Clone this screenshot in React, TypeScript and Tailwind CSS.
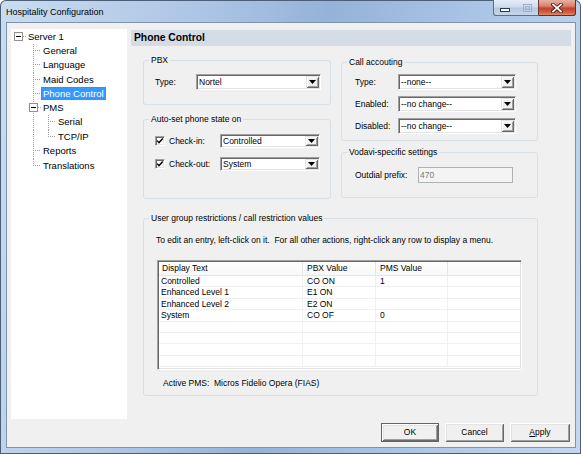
import React from "react";

type TreeItem = {
  label: string;
  kind: "root" | "l1" | "l1last" | "pms" | "l2" | "l2last";
  h: string;
  hp: number;
  selected?: boolean;
};

const tree: TreeItem[] = [
  { label: "Server 1", kind: "root", h: "h-[14px]", hp: 14 },
  { label: "General", kind: "l1", h: "h-[14px]", hp: 14 },
  { label: "Language", kind: "l1", h: "h-[15px]", hp: 15 },
  { label: "Maid Codes", kind: "l1", h: "h-[14px]", hp: 14 },
  { label: "Phone Control", kind: "l1", h: "h-[14px]", hp: 14, selected: true },
  { label: "PMS", kind: "pms", h: "h-[14px]", hp: 14 },
  { label: "Serial", kind: "l2", h: "h-[15px]", hp: 15 },
  { label: "TCP/IP", kind: "l2last", h: "h-[14px]", hp: 14 },
  { label: "Reports", kind: "l1", h: "h-[15px]", hp: 15 },
  { label: "Translations", kind: "l1last", h: "h-[14px]", hp: 14 },
];

function dotsH(x1: number, x2: number, y: number) {
  const r: React.ReactNode[] = [];
  for (let x = x1; x <= x2; x += 2) r.push(<rect key={`h${x}-${y}`} x={x} y={y} width={1} height={1} />);
  return r;
}
function dotsV(x: number, y1: number, y2: number) {
  const r: React.ReactNode[] = [];
  for (let y = y1; y <= y2; y += 2) r.push(<rect key={`v${x}-${y}`} x={x} y={y} width={1} height={1} />);
  return r;
}

function Box({ cx, cy }: { cx: number; cy: number }) {
  return (
    <g>
      <rect x={cx - 3.5} y={cy - 3.5} width={8} height={8} fill="#ffffff" stroke="#919191" strokeWidth={1} />
      <rect x={cx - 2} y={cy} width={5} height={1} fill="#000000" />
    </g>
  );
}

function TreeLines({ item }: { item: TreeItem }) {
  const h = item.hp;
  const cy = 6;
  let w = 30;
  if (item.kind === "root") w = 15;
  if (item.kind === "l2" || item.kind === "l2last") w = 45;
  const parts: React.ReactNode[] = [];
  if (item.kind === "root") {
    parts.push(...dotsH(12, 14, cy));
  } else {
    const last = item.kind === "l1last";
    parts.push(...dotsV(22, 0, last ? cy : h - 1));
    if (item.kind === "l1" || item.kind === "l1last") parts.push(...dotsH(24, 29, cy));
    if (item.kind === "pms") parts.push(...dotsH(27, 29, cy));
    if (item.kind === "l2" || item.kind === "l2last") {
      parts.push(...dotsV(37, 0, item.kind === "l2last" ? cy : h - 1));
      parts.push(...dotsH(39, 44, cy));
    }
  }
  return (
    <svg width={w} height={h} className="shrink-0" shapeRendering="crispEdges">
      <g fill="#a0a0a0">{parts}</g>
      {item.kind === "root" && <Box cx={7} cy={cy} />}
      {item.kind === "pms" && <Box cx={22} cy={cy} />}
    </svg>
  );
}

function Combo({ className, value }: { className: string; value: string }) {
  return (
    <div
      className={`flex items-stretch bg-white border border-t-[#a0a0a0] border-l-[#a0a0a0] border-r-white border-b-white p-[1px] shadow-[inset_1px_1px_0_#696969,inset_-1px_-1px_0_#e3e3e3] ${className}`}
    >
      <span className="flex flex-1 items-center pl-[1px] text-[8.5px] leading-none">{value}</span>
      <span className="flex w-[13px] items-center justify-center bg-[#f0f0f0] shadow-[inset_1px_1px_0_#e3e3e3,inset_-1px_-1px_0_#696969,inset_2px_2px_0_#ffffff,inset_-2px_-2px_0_#a0a0a0]">
        <svg width="7" height="4" viewBox="0 0 7 4">
          <path d="M0 0h7L3.5 4z" fill="#000" />
        </svg>
      </span>
    </div>
  );
}

function Check() {
  return (
    <span className="flex h-[10px] w-[10px] shrink-0 items-center justify-center bg-white border border-t-[#a0a0a0] border-l-[#a0a0a0] border-r-white border-b-white shadow-[inset_1px_1px_0_#696969,inset_-1px_-1px_0_#e3e3e3]">
      <svg width="8" height="8" viewBox="0 0 8 8">
        <path d="M1.2 3.6 L3 5.6 L6.8 1.6" stroke="#000" strokeWidth="1.4" fill="none" />
      </svg>
    </span>
  );
}

function Group({ title, className, children }: { title: string; className: string; children: React.ReactNode }) {
  return (
    <fieldset className={`rounded-[3px] border border-[#d5dfe5] ${className}`}>
      <legend className="ml-[5px] px-[2px] text-[8.5px] leading-[10px]">{title}</legend>
      {children}
    </fieldset>
  );
}

const btn3d =
  "flex h-[19px] items-center justify-center bg-[#f0f0f0] text-[8.5px] leading-none shadow-[inset_1px_1px_0_#ffffff,inset_-1px_-1px_0_#696969,inset_2px_2px_0_#e3e3e3,inset_-2px_-2px_0_#a0a0a0]";

const rows = [
  ["Controlled", "CO ON", "1"],
  ["Enhanced Level 1", "E1 ON", ""],
  ["Enhanced Level 2", "E2 ON", ""],
  ["System", "CO OF", "0"],
  ["", "", ""],
  ["", "", ""],
  ["", "", ""],
  ["", "", ""],
];

function CaptionButtons() {
  return (
    <div className="mr-[5px] flex h-[16px]">
      <div className="flex w-[23px] items-end justify-center rounded-bl-[3px] border border-r-0 border-t-0 border-[#5d6f88] bg-[linear-gradient(180deg,#e6eef8_0%,#cfdcee_45%,#b6c8e0_55%,#c6d6ea_100%)] pb-[3px]">
        <svg width="10" height="4" viewBox="0 0 10 4">
          <rect x="0.5" y="0.5" width="9" height="3" fill="#ffffff" stroke="#2b3a52" strokeWidth="1" />
        </svg>
      </div>
      <div className="flex w-[22px] items-center justify-center border-b border-[#5d6f88] bg-[linear-gradient(180deg,#e6eef8_0%,#cfdcee_45%,#b6c8e0_55%,#c6d6ea_100%)]">
        <svg width="9" height="8" viewBox="0 0 9 8">
          <rect x="0.5" y="0.5" width="8" height="7" fill="none" stroke="#9fb0c6" strokeWidth="1" />
          <rect x="1.5" y="1.5" width="6" height="1" fill="#dfe7f1" />
          <rect x="2.5" y="2.5" width="4" height="3" fill="none" stroke="#9fb0c6" strokeWidth="1" />
        </svg>
      </div>
      <div className="flex w-[38px] items-center justify-center rounded-br-[3px] border border-l-[#6b3a3a] border-t-0 border-[#6b2b24] bg-[linear-gradient(180deg,#eab0a2_0%,#d9826f_40%,#c5412c_55%,#d25a3e_80%,#e08a66_100%)]">
        <svg width="12" height="10" viewBox="0 0 12 10">
          <path d="M2 1.5 L10 8.5 M10 1.5 L2 8.5" stroke="#4a1712" strokeWidth="3.6" strokeLinecap="square" />
          <path d="M2 1.5 L10 8.5 M10 1.5 L2 8.5" stroke="#ffffff" strokeWidth="1.8" strokeLinecap="square" />
        </svg>
      </div>
    </div>
  );
}

export default function App() {
  return (
    <div className="h-[454px] w-[581px] overflow-hidden font-['Liberation_Sans',Arial,sans-serif] text-black">
      <div className="h-[454px] w-[581px] rounded-t-[6px] bg-[linear-gradient(100deg,#c9dcf1_0%,#adc6e5_30%,#95b3d8_50%,#a9c4e5_72%,#c3d8ef_100%)] shadow-[inset_0_0_0_1px_#4b5f79]">
        {/* title bar */}
        <div className="flex h-[22px] items-start justify-between">
          <div className="pl-[6px] pt-[6px] text-[9px] leading-[12px]">Hospitality Configuration</div>
          <CaptionButtons />
        </div>

        {/* client */}
        <div className="ml-[6px] flex h-[426px] w-[570px] flex-col border border-[#8193ab] bg-[#f0f0f0]">
          <div className="flex h-[396px]">
            {/* tree */}
            <div className="ml-[4px] mt-[6px] h-[390px] w-[116px] bg-white pt-[1px]">
              {tree.map((t) => (
                <div key={t.label} className={`flex items-start ${t.h}`}>
                  <TreeLines item={t} />
                  <span
                    className={`-mt-[0px] flex h-[13px] items-center whitespace-nowrap border px-[1px] text-[9.5px] leading-[13px] ${
                      t.selected ? "border-dotted border-[#cc6600] bg-[#3399ff] text-white" : "border-transparent"
                    }`}
                  >
                    {t.label}
                  </span>
                </div>
              ))}
            </div>

            {/* right pane */}
            <div className="ml-[4px] flex w-[440px] flex-col">
              <div className="mt-[7px] flex h-[16px] items-center bg-[#d4dce6] pl-[3px] text-[10.3px] font-bold leading-none">
                Phone Control
              </div>

              <div className="mt-[9px] flex items-start gap-[10px] pl-[12px]">
                {/* left column */}
                <div className="flex w-[188px] flex-col">
                  <Group title="PBX" className="w-[188px]">
                    <div className="mb-[14px] mt-[9px] flex items-center pl-[11px] text-[8.5px]">
                      <span className="w-[41px]">Type:</span>
                      <Combo className="h-[16px] w-[125px]" value="Nortel" />
                    </div>
                  </Group>
                  <Group title="Auto-set phone state on" className="mt-[9px] w-[188px]">
                    <div className="mb-[27px] mt-[10px] flex flex-col gap-[9px] pl-[11px] text-[8.5px]">
                      <div className="flex items-center">
                        <Check />
                        <span className="ml-[4px] w-[51px]">Check-in:</span>
                        <Combo className="h-[14px] w-[100px]" value="Controlled" />
                      </div>
                      <div className="flex items-center">
                        <Check />
                        <span className="ml-[4px] w-[51px]">Check-out:</span>
                        <Combo className="h-[14px] w-[100px]" value="System" />
                      </div>
                    </div>
                  </Group>
                </div>

                {/* right column */}
                <div className="mt-[2px] flex w-[197px] flex-col">
                  <Group title="Call accouting" className="w-[197px]">
                    <div className="mb-[6px] mt-[7px] flex flex-col gap-[6px] pl-[13px] text-[8.5px]">
                      <div className="flex items-center">
                        <span className="w-[43px]">Type:</span>
                        <Combo className="h-[16px] w-[118px]" value="--none--" />
                      </div>
                      <div className="flex items-center">
                        <span className="w-[43px]">Enabled:</span>
                        <Combo className="h-[16px] w-[118px]" value="--no change--" />
                      </div>
                      <div className="flex items-center">
                        <span className="w-[43px]">Disabled:</span>
                        <Combo className="h-[16px] w-[118px]" value="--no change--" />
                      </div>
                    </div>
                  </Group>
                  <Group title="Vodavi-specific settings" className="mt-[6px] w-[197px]">
                    <div className="mb-[14px] mt-[10px] flex items-center pl-[13px] text-[8.5px]">
                      <span className="w-[63px]">Outdial prefix:</span>
                      <div className="flex h-[16px] w-[95px] items-center border border-[#adb2b5] bg-[#f4f4f4] pl-[1px] text-[8.5px] text-[#7a7a7a]">
                        470
                      </div>
                    </div>
                  </Group>
                </div>
              </div>

              <Group title="User group restrictions / call restriction values" className="ml-[12px] mt-[14px] w-[395px]">
                <div className="mt-[12px] pl-[12px] text-[8.5px] leading-[10px]">
                  To edit an entry, left-click on it.&nbsp; For all other actions, right-click any row to display a menu.
                </div>
                <div className="ml-[13px] mt-[15px] flex h-[110px] w-[365px] flex-col overflow-hidden border border-b-white border-l-[#a0a0a0] border-r-white border-t-[#a0a0a0] bg-white p-[1px] text-[8.5px] shadow-[inset_1px_1px_0_#696969,inset_-1px_-1px_0_#e3e3e3]">
                  <div className="flex h-[14px] shrink-0 border-b border-[#e5e5e5] bg-[linear-gradient(180deg,#ffffff,#f7f8fa)]">
                    <div className="flex w-[144px] items-center border-r border-[#e5e5e5] pl-[3px]">Display Text</div>
                    <div className="flex w-[73px] items-center border-r border-[#e5e5e5] pl-[4px]">PBX Value</div>
                    <div className="flex w-[72px] items-center border-r border-[#e5e5e5] pl-[4px]">PMS Value</div>
                    <div className="flex-1" />
                  </div>
                  {rows.map((r, i) => (
                    <div key={i} className="flex h-[11.4px] shrink-0 border-b border-[#f0f0f0] leading-none">
                      <div className="flex w-[144px] items-center border-r border-[#f0f0f0] pl-[2px]">{r[0]}</div>
                      <div className="flex w-[73px] items-center border-r border-[#f0f0f0] pl-[4px]">{r[1]}</div>
                      <div className="flex w-[72px] items-center border-r border-[#f0f0f0] pl-[4px]">{r[2]}</div>
                      <div className="flex-1" />
                    </div>
                  ))}
                </div>
                <div className="mb-[7px] mt-[8px] whitespace-pre pl-[19px] text-[8.5px] leading-[10px]">
                  {"Active PMS:  Micros Fidelio Opera (FIAS)"}
                </div>
              </Group>
            </div>
          </div>

          {/* buttons */}
          <div className="mt-[4px] flex justify-end gap-[6px] pr-[5px]">
            <button className="flex h-[19px] w-[58px] items-center justify-center border border-[#646464] bg-[#f0f0f0] text-[8.5px] leading-none shadow-[inset_1px_1px_0_#ffffff,inset_-1px_-1px_0_#696969,inset_2px_2px_0_#e3e3e3,inset_-2px_-2px_0_#a0a0a0]">
              OK
            </button>
            <button className={`${btn3d} w-[59px]`}>Cancel</button>
            <button className={`${btn3d} w-[60px]`}>
              <span className="underline underline-offset-[1px]">A</span>pply
            </button>
          </div>
        </div>
      </div>
    </div>
  );
}
